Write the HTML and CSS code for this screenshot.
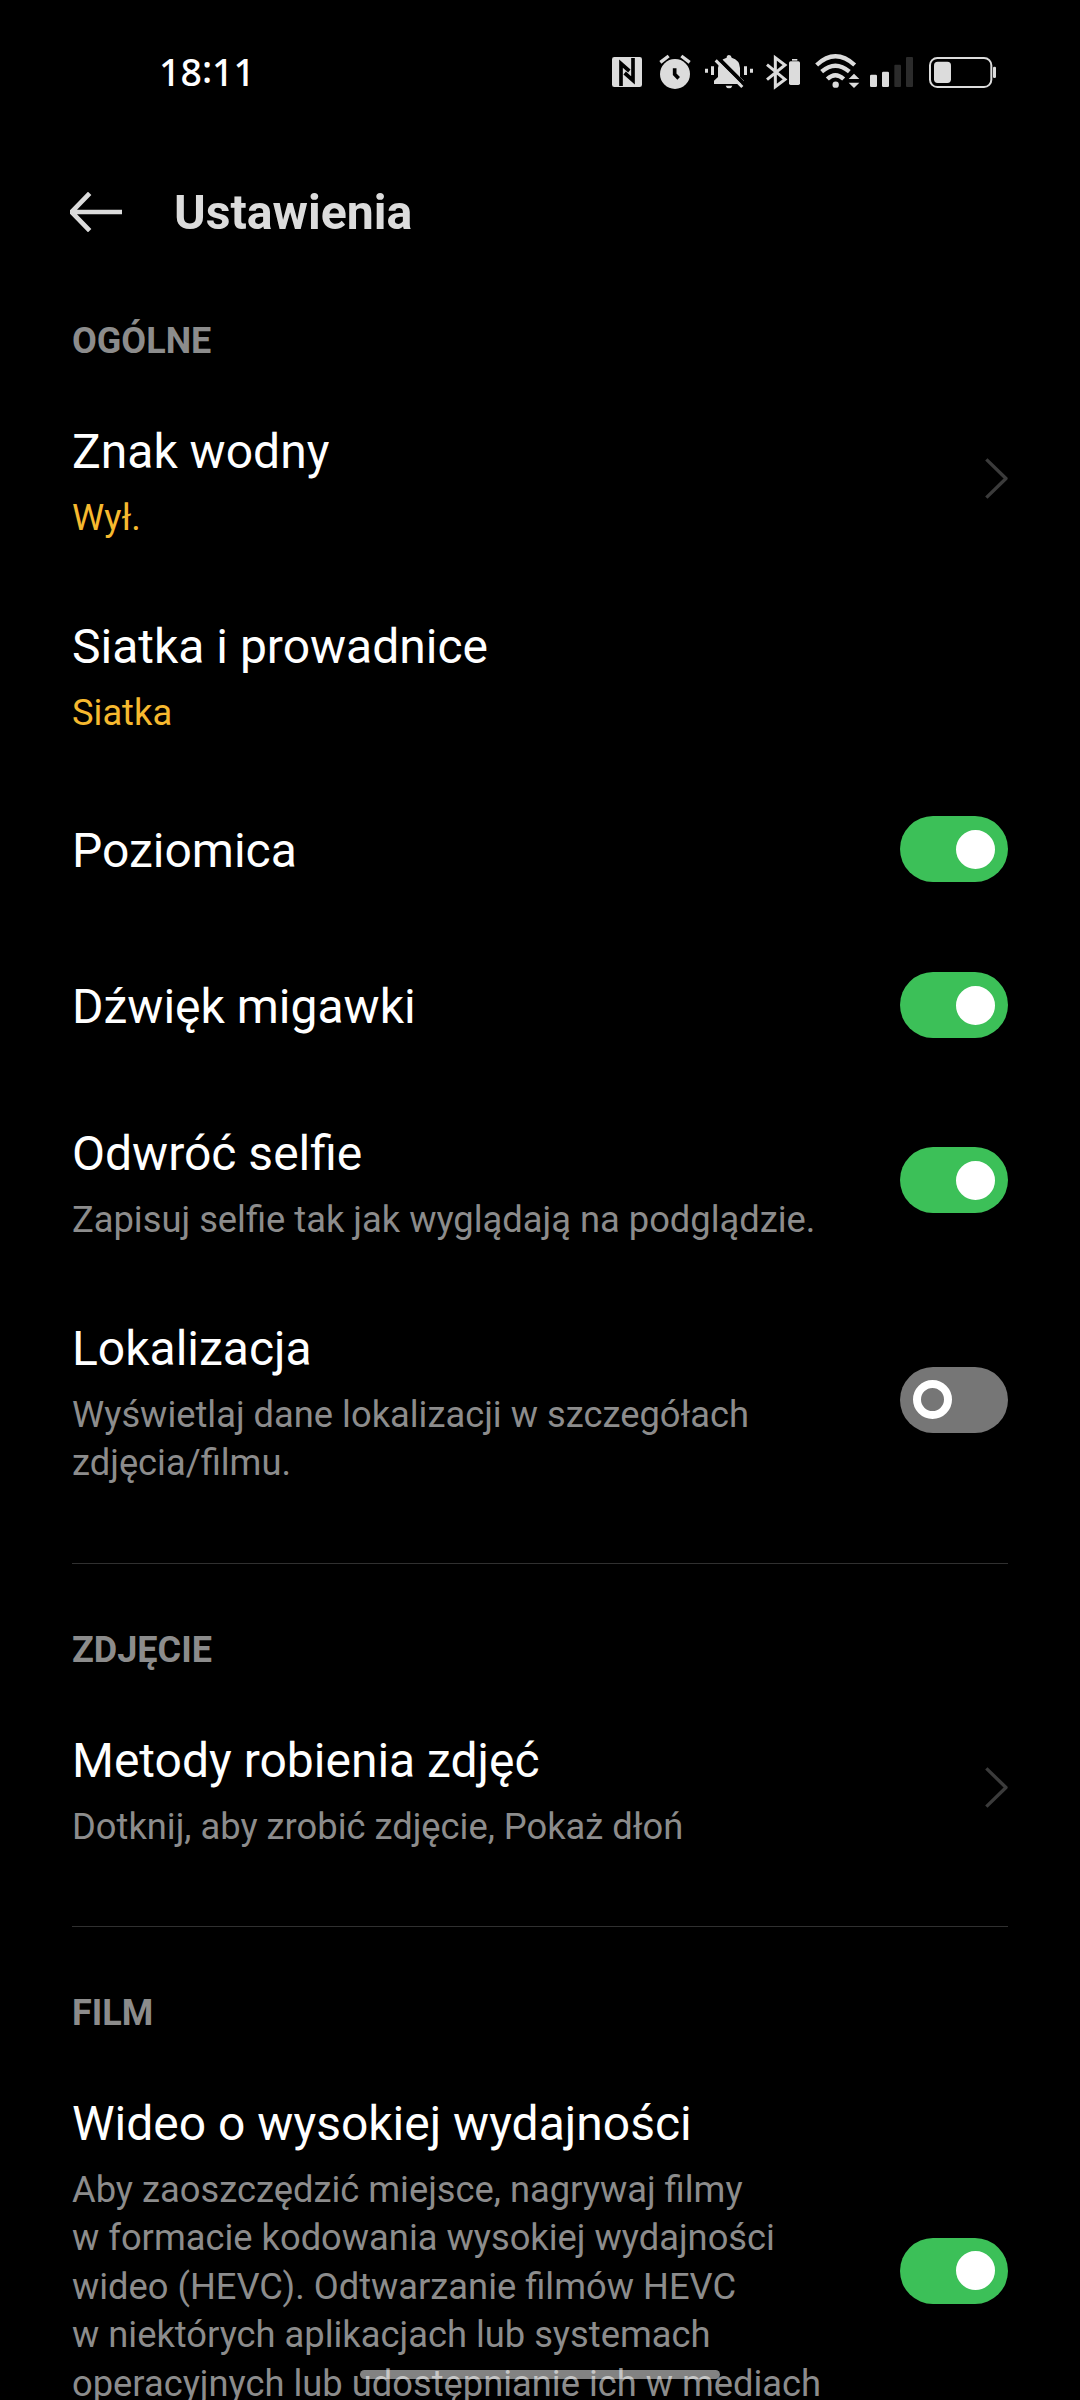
FILE: index.html
```html
<!DOCTYPE html>
<html lang="pl">
<head>
<meta charset="utf-8">
<title>Ustawienia</title>
<link rel="stylesheet" href="styles.css">
</head>
<body>
<div class="screen">
  <header class="status">
    <span class="clock">18<span class="colon">:</span>11</span>
    <div class="status-icons">
      <svg class="nfc" viewBox="36 0 90 192"><rect x="36" y="51" width="90" height="90" rx="7" fill="#dcdcdc"/><path d="M63 138V71L88 93M99 54V121L74 99" fill="none" stroke="#000" stroke-width="11"/></svg>
      <svg class="alarm" viewBox="177 0 96 192"><circle cx="225" cy="102" r="45" fill="#dcdcdc"/><path d="M181 67L206 48M269 67L244 48" stroke="#dcdcdc" stroke-width="10"/><path d="M224 85V103L236 115" fill="none" stroke="#000" stroke-width="11"/></svg>
      <svg class="bell" viewBox="315 0 144 192"><path d="M342 132V122L354 111V84Q356 60 380 53Q380 45 387 45T395 53Q419 60 420 84V111L432 122V132ZM377 137H397Q395 145 387 145T377 137Z" fill="#dcdcdc"/><path d="M354 54L434 134" stroke="#000" stroke-width="12"/><path d="M347 61L427 141" stroke="#dcdcdc" stroke-width="9"/><path d="M319.500 86V98M337.500 79V105M436.500 79V105M454.500 86V98" stroke="#dcdcdc" stroke-width="9"/></svg>
      <svg class="bluetooth" viewBox="498 0 102 192"><path d="M501 74L555 118L526 140V53L555 75L501 119" fill="none" stroke="#dcdcdc" stroke-width="9"/><path d="M576 57H592V62H576Z" fill="#dcdcdc"/><rect x="567" y="64" width="33" height="71" rx="5" fill="#dcdcdc"/></svg>
      <svg class="wifi" viewBox="75 0 135 192"><g fill="none" stroke="#dcdcdc" stroke-width="13"><path d="M80 75Q136 23 194 75"/><path d="M95 95Q136 59 178 95"/><path d="M112 117Q136 94 161 117"/></g><circle cx="137" cy="134" r="9.500" fill="#dcdcdc"/><path d="M176 117L192 101L208 117ZM176 128H208L192 144Z" fill="#dcdcdc"/></svg>
      <svg class="signal" viewBox="240 0 129 192"><rect x="240" y="104" width="21" height="37" rx="4" fill="#dcdcdc"/><rect x="276" y="95" width="21" height="46" rx="4" fill="#dcdcdc"/><rect x="313" y="74" width="20" height="67" rx="3" fill="#2b2b2b"/><rect x="348" y="51" width="21" height="90" rx="3" fill="#2b2b2b"/></svg>
      <svg class="battery" viewBox="417 0 201 192"><rect x="420" y="54" width="184" height="87" rx="22" fill="none" stroke="#dcdcdc" stroke-width="6"/><rect x="432" y="65" width="51" height="64" rx="11" fill="#dcdcdc"/><rect x="609" y="80" width="9" height="34" rx="4" fill="#dcdcdc"/></svg>
    </div>
  </header>

  <div class="toolbar">
    <svg class="back" viewBox="0 0 156 120"><path d="M59 4L5 60L59 116M5 60H156" fill="none" stroke="#dcdcdc" stroke-width="14"/></svg>
    <h1>Ustawienia</h1>
  </div>

  <section>
    <h2>OGÓLNE</h2>
    <div class="row">
      <div class="text"><div class="label">Znak wodny</div><div class="note value">Wył.</div></div>
      <svg class="chevron" viewBox="0 0 69 123"><path d="M4 4L63 61.500L4 119" fill="none" stroke="#3b3b3b" stroke-width="10" stroke-linejoin="round"/></svg>
    </div>
    <div class="row">
      <div class="text"><div class="label">Siatka i prowadnice</div><div class="note value">Siatka</div></div>
    </div>
    <div class="row single"><div class="label">Poziomica</div><div class="switch on"></div></div>
    <div class="row single"><div class="label">Dźwięk migawki</div><div class="switch on"></div></div>
    <div class="row">
      <div class="text"><div class="label">Odwróć selfie</div><div class="note">Zapisuj selfie tak jak wyglądają na podglądzie.</div></div>
      <div class="switch on"></div>
    </div>
    <div class="row double">
      <div class="text"><div class="label">Lokalizacja</div><div class="note">Wyświetlaj dane lokalizacji w szczegółach<br>zdjęcia/filmu.</div></div>
      <div class="switch"></div>
    </div>
  </section>

  <section class="divided">
    <h2>ZDJĘCIE</h2>
    <div class="row">
      <div class="text"><div class="label">Metody robienia zdjęć</div><div class="note">Dotknij, aby zrobić zdjęcie, Pokaż dłoń</div></div>
      <svg class="chevron" viewBox="0 0 69 123"><path d="M4 4L63 61.500L4 119" fill="none" stroke="#3b3b3b" stroke-width="10" stroke-linejoin="round"/></svg>
    </div>
  </section>

  <section class="divided">
    <h2>FILM</h2>
    <div class="row long">
      <div class="text"><div class="label">Wideo o wysokiej wydajności</div><div class="note">Aby zaoszczędzić miejsce, nagrywaj filmy<br>w formacie kodowania wysokiej wydajności<br>wideo (HEVC). Odtwarzanie filmów HEVC<br>w niektórych aplikacjach lub systemach<br>operacyjnych lub udostępnianie ich w mediach</div></div>
      <div class="switch on"></div>
    </div>
  </section>
  <div class="home-bar"></div>
</div>
</body>
</html>
```
FILE: styles.css
```css
*, *::before { box-sizing: border-box; }
body { margin: 0; background: #000; }
.screen {
  position: relative;
  width: 1080px;
  height: 2400px;
  overflow: hidden;
  background: #000;
  color: #fff;
  font-family: Roboto, sans-serif;
}
svg { display: block; flex: none; }

.status {
  display: flex;
  justify-content: space-between;
  align-items: flex-start;
  height: 144px;
  padding: 40px 84px 0 159px;
}
.clock { font: 500 37.5px/64px "Noto Sans", sans-serif; }
.colon { vertical-align: 3px; line-height: 1; }
.status-icons { display: flex; }
.status-icons svg { height: 64px; }
.nfc { width: 30px; }
.alarm { width: 32px; margin-left: 17px; }
.bell { width: 48px; margin-left: 14px; }
.bluetooth { width: 34px; margin-left: 13px; }
.wifi { width: 45px; margin-left: 15px; }
.signal { width: 43px; margin-left: 10px; }
.battery { width: 67px; margin-left: 16px; }

.toolbar {
  display: flex;
  align-items: center;
  height: 136px;
  padding: 0 0 0 70px;
}
.back { width: 52px; height: 40px; }
h1 {
  margin: 2px 0 0 52px;
  color: #dcdcdc;
  font-size: 48.2px;
  font-weight: 700;
  line-height: 56px;
}

section { margin: 0 72px; }
.divided { margin-top: 41px; border-top: 1px solid #303030; }
h2 {
  margin: 0;
  padding-top: 40px;
  height: 101px;
  color: #8c8c8c;
  font-size: 36px;
  font-weight: 700;
  line-height: 42px;
}
.divided h2 { height: 126px; padding-top: 65px; }

.row {
  display: flex;
  justify-content: space-between;
  align-items: center;
  height: 195px;
  padding-bottom: 1px;
}
.single { height: 156px; padding-bottom: 0; }
.single .label { padding-top: 4px; }
.double { height: 244px; }
.long { height: 437px; padding-bottom: 2px; }
.text { align-self: flex-start; padding-top: 43px; }
.label { font-size: 48px; line-height: 56px; }
.note {
  margin-top: 14px;
  color: #8c8c8c;
  font-size: 36.3px;
  line-height: 48.4px;
  white-space: nowrap;
}
.value { color: #f6b92f; }
.chevron { width: 23px; height: 41px; }

.switch {
  display: flex;
  align-items: center;
  flex: none;
  width: 108px;
  height: 66px;
  padding: 0 13px;
  border-radius: 33px;
  background: #767676;
}
.switch::before {
  content: "";
  width: 39px;
  height: 39px;
  border: 8px solid #fff;
  border-radius: 50%;
}
.switch.on { justify-content: flex-end; background: #3cc058; }
.switch.on::before { background: #fff; }

.home-bar {
  position: absolute;
  left: 360px;
  bottom: 21px;
  width: 360px;
  height: 9px;
  border-radius: 5px;
  background: rgba(255, 255, 255, .51);
}
```
